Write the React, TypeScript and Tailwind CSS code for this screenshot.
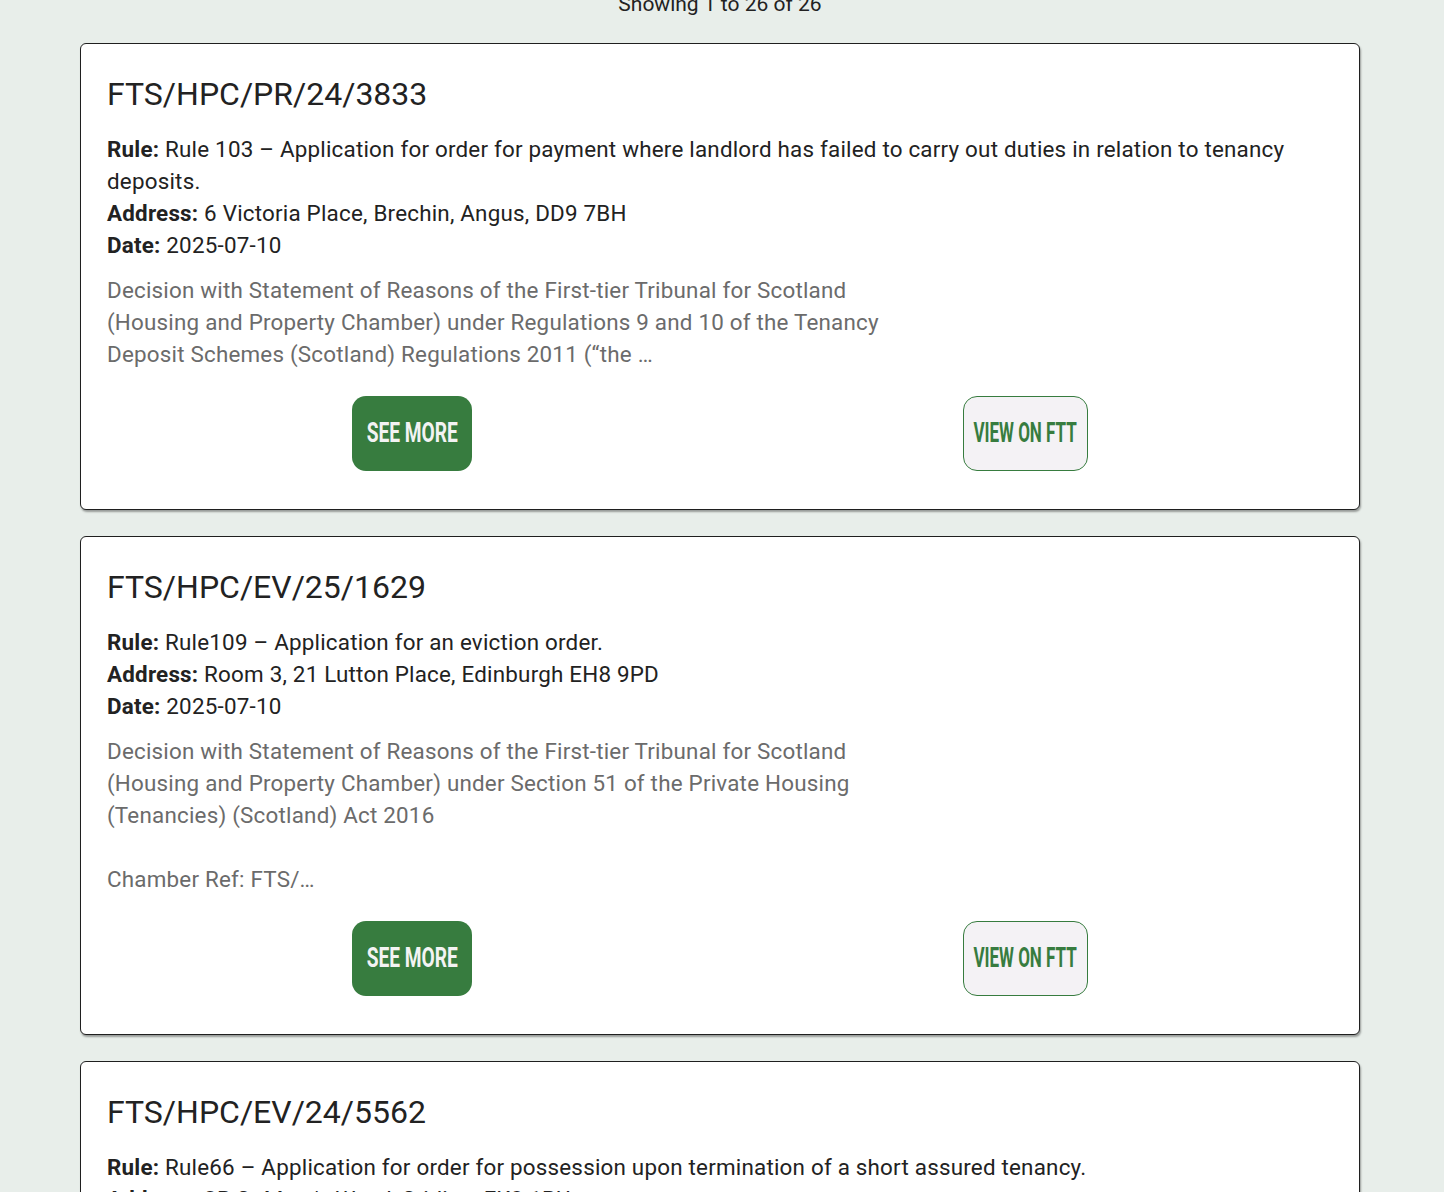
import React from "react";

type Decision = {
    ref: string;
    rule: string;
    address: string;
    date: string;
    summary: string;
};

const decisions: Decision[] = [
    {
        ref: "FTS/HPC/PR/24/3833",
        rule: "Rule 103 – Application for order for payment where landlord has failed to carry out duties in relation to tenancy deposits.",
        address: "6 Victoria Place, Brechin, Angus, DD9 7BH",
        date: "2025-07-10",
        summary:
            "Decision with Statement of Reasons of the First-tier Tribunal for Scotland (Housing and Property Chamber) under Regulations 9 and 10 of the Tenancy Deposit Schemes (Scotland) Regulations 2011 (“the …",
    },
    {
        ref: "FTS/HPC/EV/25/1629",
        rule: "Rule109 – Application for an eviction order.",
        address: "Room 3, 21 Lutton Place, Edinburgh EH8 9PD",
        date: "2025-07-10",
        summary:
            "Decision with Statement of Reasons of the First-tier Tribunal for Scotland (Housing and Property Chamber) under Section 51 of the Private Housing (Tenancies) (Scotland) Act 2016\n\nChamber Ref: FTS/…",
    },
    {
        ref: "FTS/HPC/EV/24/5562",
        rule: "Rule66 – Application for order for possession upon termination of a short assured tenancy.",
        address: "3B St Mary's Wynd, Stirling, FK8 1BU",
        date: "2025-07-09",
        summary:
            "Decision with Statement of Reasons of the First-tier Tribunal for Scotland (Housing and Property Chamber) under Section 33 of the Housing (Scotland) Act 1988",
    },
];

const DecisionCard = ({ d }: { d: Decision }) => {
    return (
        <div className="bg-white border border-[#1f1f1f] rounded-[6px] shadow-[1px_2px_2px_rgba(0,0,0,0.35)] px-[26px] pt-[26px] pb-[38px]">
            <h2 className="text-[32px] leading-[48px] text-[#222]">{d.ref}</h2>
            <div className="mt-[15px] text-[22.4px] leading-[32px] tracking-[0.21px] text-[#222]">
                <p><span className="font-bold">Rule:</span> {d.rule}</p>
                <p><span className="font-bold">Address:</span> {d.address}</p>
                <p><span className="font-bold">Date:</span> {d.date}</p>
            </div>
            <p className="mt-[13px] max-w-[800px] whitespace-pre-line text-[22.4px] leading-[32px] tracking-[0.21px] text-[#6b6b6b]">{d.summary}</p>
            <div className="mt-[26px] flex justify-around">
                <button className="w-[120px] h-[75px] rounded-[14px] bg-[#377c3f] text-[#f3f3f3] flex items-center justify-center">
                    <span className="inline-block text-[27px] font-bold leading-none scale-x-[0.71] whitespace-nowrap">SEE MORE</span>
                </button>
                <button className="w-[125px] h-[75px] rounded-[14px] bg-[#f4f2f5] border border-[#377c3f] text-[#377c3f] flex items-center justify-center">
                    <span className="inline-block text-[27px] font-bold leading-none scale-x-[0.63] whitespace-nowrap">VIEW ON FTT</span>
                </button>
            </div>
        </div>
    );
};

const App = () => {
    return (
        <div className="min-h-screen bg-[#e8eeea] font-['Roboto',sans-serif] overflow-hidden">
            <div className="-mt-[12px] pl-[80px] pr-[84px]">
                <p className="text-center text-[21px] leading-[32px] text-[#222]">Showing 1 to 26 of 26</p>
                <div className="mt-[23px] flex flex-col gap-[26px]">
                    {decisions.map((d) => (
                        <DecisionCard key={d.ref} d={d} />
                    ))}
                </div>
            </div>
        </div>
    );
};

export default App;
